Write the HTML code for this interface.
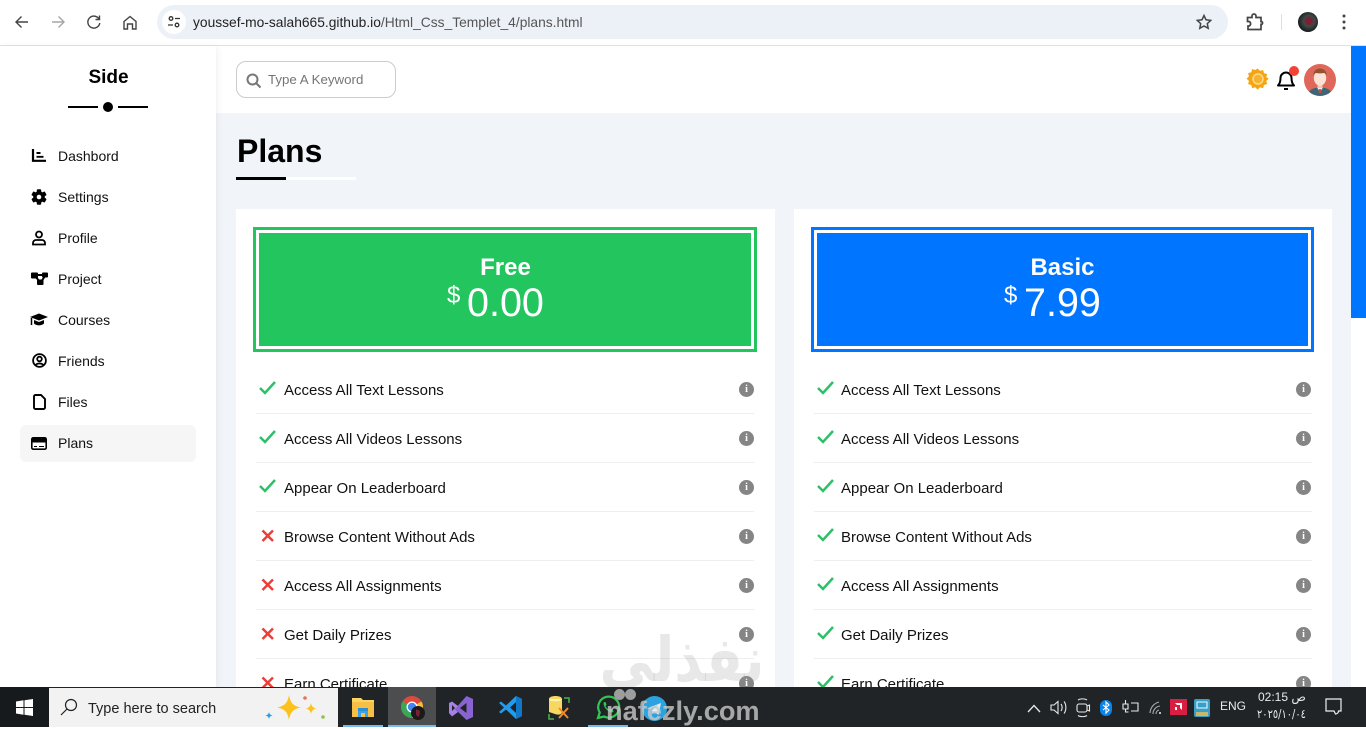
<!DOCTYPE html>
<html lang="en"><head><meta charset="utf-8"><title>Plans</title>
<style>
*{box-sizing:border-box;margin:0;padding:0}
html,body{width:1366px;height:727px;overflow:hidden;background:#fff;font-family:"Liberation Sans",sans-serif;color:#000}
.a{position:absolute}
svg{position:absolute;display:block;overflow:visible}
.nav{position:absolute;left:58px;font-size:14px;line-height:16px;color:#111;white-space:nowrap}
.row{position:absolute;font-size:15px;line-height:18px;white-space:nowrap;color:#111}
.sep{position:absolute;height:1px;background:#eee}
.card{position:absolute;top:209px;height:478px;background:#fff}
.head{position:absolute;top:227px;height:125px;width:504px;color:#fff;text-align:center}
.info{position:absolute;width:15px;height:15px;border-radius:50%;background:#858585;color:#fff;font:bold 10px/15px "Liberation Serif",serif;text-align:center}
</style></head><body>

<!-- browser chrome -->
<div class="a" style="left:0;top:0;width:1366px;height:46px;background:#fff;border-bottom:1px solid #dfe3e8"></div>
<svg style="left:0;top:0" width="160" height="46" fill="none" stroke="#444" stroke-width="1.400">
<path d="M28 22H16M21.500 16.500L16 22l5.500 5.500"/>
<path d="M52 22H64M58.500 16.500L64 22l-5.500 5.500" stroke="#a5a5a5"/>
<path d="M99 19a6 6 0 1 0 .8 4M99.500 15.500V19.500H95.500"/>
<path d="M124 21.500L130 16.500l6 5v7.500h-3.500v-5h-5v5H124z"/>
</svg>
<div class="a" style="left:157px;top:5px;width:1071px;height:34px;border-radius:17px;background:#ecf1f8"></div>
<div class="a" style="left:162px;top:10px;width:24px;height:24px;border-radius:50%;background:#fff"></div>
<svg style="left:162px;top:10px" width="24" height="24" fill="none" stroke="#333" stroke-width="1.300"><circle cx="9" cy="8.500" r="1.800"/><path d="M13 8.500h5M6 15h5"/><circle cx="15" cy="15" r="1.800"/></svg>
<div class="a" style="left:193px;top:14px;font-size:13.800px;line-height:17px;color:#222;white-space:nowrap">youssef-mo-salah665.github.io<span style="color:#555">/Html_Css_Templet_4/plans.html</span></div>
<svg style="left:1196px;top:14px" width="16" height="16" viewBox="0 0 16 16" fill="none" stroke="#444" stroke-width="1.500"><path d="M8 1.500l2 4.300 4.700.6-3.400 3.200.9 4.700L8 12l-4.200 2.300.9-4.700L1.300 6.400 6 5.800z"/></svg>
<svg style="left:1246px;top:13px" width="18" height="18" viewBox="0 0 18 18" fill="none" stroke="#444" stroke-width="1.700"><path d="M1.500 4.500H6V3a2 2 0 0 1 4 0v1.500h5v4.200h1a2 2 0 0 1 0 2.600h-1v5.200H2v-3.500h1.200a2.500 2.500 0 0 0 0-4.500H1.500z"/></svg>
<div class="a" style="left:1281px;top:14px;width:1px;height:16px;background:#d5e0ee"></div>
<div class="a" style="left:1298px;top:12px;width:20px;height:20px;border-radius:50%;background:radial-gradient(circle at 55% 45%,#7a2030 0 18%,#3d4a48 35%,#151515 75%)"></div>
<svg style="left:1342px;top:14px" width="4" height="16" fill="#444"><circle cx="2" cy="2" r="1.500"/><circle cx="2" cy="8" r="1.500"/><circle cx="2" cy="14" r="1.500"/></svg>

<!-- page bg -->
<div class="a" style="left:216px;top:46px;width:1135px;height:641px;background:#f1f5f9"></div>
<div class="a" style="left:1351px;top:46px;width:15px;height:272px;background:#0075ff"></div>

<!-- top header -->
<div class="a" style="left:216px;top:46px;width:1135px;height:67px;background:#fff"></div>

<!-- sidebar -->
<div class="a" style="left:0;top:46px;width:216px;height:641px;background:#fff;box-shadow:2px 0 6px rgba(0,0,0,.05)"></div>
<div class="a" style="left:0;top:66px;width:217px;text-align:center;font-size:19px;font-weight:bold;line-height:23px">Side</div>
<div class="a" style="left:68px;top:106px;width:30px;height:2px;background:#000"></div>
<div class="a" style="left:118px;top:106px;width:30px;height:2px;background:#000"></div>
<div class="a" style="left:103px;top:102px;width:10px;height:10px;border-radius:50%;background:#000"></div>
<div class="a" style="left:20px;top:425px;width:176px;height:37px;border-radius:6px;background:#f6f6f6"></div>

<svg style="left:31px;top:148px" width="16" height="16" fill="none" stroke="#000" stroke-width="2.200"><path d="M2 1v11.800h13"/><path d="M5.500 5h4M5.500 8.800h7" stroke-width="1.900"/></svg>
<svg style="left:31px;top:189px" width="16" height="16" viewBox="0 0 16 16"><g fill="#000"><rect x="5.800" y="0.300" width="4.400" height="15.400" rx="1"/><rect x="5.800" y="0.300" width="4.400" height="15.400" rx="1" transform="rotate(60 8 8)"/><rect x="5.800" y="0.300" width="4.400" height="15.400" rx="1" transform="rotate(120 8 8)"/><circle cx="8" cy="8" r="5.800"/></g><circle cx="8" cy="8" r="2.300" fill="#fff"/></svg>
<svg style="left:32px;top:230px" width="14" height="16" fill="none" stroke="#000" stroke-width="1.800"><circle cx="7" cy="4.500" r="3"/><path d="M1 14.500v-1.500a3 3 0 0 1 3-3h6a3 3 0 0 1 3 3v1.500z"/></svg>
<svg style="left:31px;top:272px" width="17" height="14"><g fill="#000"><rect x="0" y="0.500" width="7" height="6" rx="1"/><rect x="11" y="0.500" width="6" height="5" rx="1"/><rect x="6" y="7.500" width="6.500" height="5.500" rx="1"/></g><path d="M5 3H12M4 4l5 6M14 4l-4 6" stroke="#000" stroke-width="2"/></svg>
<svg style="left:30px;top:313px" width="18" height="14" viewBox="0 0 18 14"><path d="M9 0.500L18 4 9 7.500 0 4z" fill="#000"/><path d="M4 7v3.500c2.500 2.500 7.500 2.500 10 0V7L9 9z" fill="#000"/><path d="M1.500 5v7" stroke="#000" stroke-width="1.500"/></svg>
<svg style="left:32px;top:353px" width="15" height="15" fill="none" stroke="#000" stroke-width="1.800"><circle cx="7.500" cy="7.500" r="6.400"/><circle cx="7.500" cy="6" r="2.300"/><path d="M3.500 12.500c1-2.700 7-2.700 8 0"/></svg>
<svg style="left:33px;top:394px" width="13" height="16" fill="none" stroke="#000" stroke-width="1.900"><path d="M1 2.500a1.500 1.500 0 0 1 1.500-1.500H8l4 4v8.500a1.500 1.500 0 0 1-1.500 1.500h-8A1.500 1.500 0 0 1 1 13.500z"/></svg>
<svg style="left:31px;top:437px" width="16" height="13"><rect x="0.800" y="0.800" width="14.400" height="11.400" rx="1.500" fill="#fff" stroke="#000" stroke-width="1.600"/><rect x="1" y="1.500" width="14" height="4" fill="#000"/><path d="M3 9.500h3M8 9.500h5" stroke="#000"/></svg>

<div class="nav" style="top:148px">Dashbord</div>
<div class="nav" style="top:189px">Settings</div>
<div class="nav" style="top:230px">Profile</div>
<div class="nav" style="top:271px">Project</div>
<div class="nav" style="top:312px">Courses</div>
<div class="nav" style="top:353px">Friends</div>
<div class="nav" style="top:394px">Files</div>
<div class="nav" style="top:435px">Plans</div>

<!-- header controls -->
<div class="a" style="left:236px;top:61px;width:160px;height:37px;border:1px solid #ccc;border-radius:10px;background:#fff"></div>
<svg style="left:246px;top:73px" width="16" height="16" fill="none" stroke="#777" stroke-width="2"><circle cx="6.500" cy="6.500" r="5"/><path d="M10.500 10.500L14.500 14.500"/></svg>
<div class="a" style="left:268px;top:72px;font-size:13.300px;line-height:16px;color:#757575;white-space:nowrap">Type A Keyword</div>

<svg style="left:1247px;top:68px" width="22" height="22" viewBox="0 0 22 22"><path d="M11 0l2.600 2.600 3.400-1 .9 3.500 3.500.9-1 3.400L23 11l-2.600 2.600 1 3.400-3.500.9-.9 3.500-3.400-1L11 23l-2.600-2.600-3.400 1-.9-3.500-3.500-.9 1-3.400L-1 11l2.600-2.600-1-3.400 3.500-.9.9-3.500 3.400 1z" fill="#f5a511" transform="translate(.5 .5) scale(.92)"/><circle cx="11" cy="11" r="5" fill="#f7b232" stroke="#fdd98c" stroke-width="1.500"/></svg>
<svg style="left:1277px;top:70px" width="18" height="22" viewBox="0 0 18 22" fill="none" stroke="#000" stroke-width="2"><path d="M1 15.500c2-2 2.500-4 2.500-7.500a5.500 5.500 0 0 1 11 0c0 3.500.5 5.500 2.500 7.500z" stroke-linejoin="round"/><path d="M7 19h4"/></svg>
<div class="a" style="left:1289px;top:66px;width:10px;height:10px;border-radius:50%;background:#f44336"></div>
<svg style="left:1304px;top:64px" width="32" height="32" viewBox="0 0 32 32"><defs><clipPath id="c"><circle cx="16" cy="16" r="16"/></clipPath></defs><g clip-path="url(#c)"><rect width="32" height="32" fill="#e0685a"/><path d="M4 32c0-6 5-8.500 12-8.500S28 26 28 32z" fill="#3e6478"/><path d="M13 23.500h6L16 28z" fill="#f3e9e2"/><path d="M15.200 25h1.600l.6 4h-2.800z" fill="#c74c40"/><rect x="13.500" y="19" width="5" height="5" fill="#edc8b4"/><ellipse cx="16" cy="14" rx="6.200" ry="7.600" fill="#fbe2d5"/><path d="M9.500 12c-.5-5 3-7.500 6.500-7.500s7 2.500 6.500 7.500c-.5-1.500-1.200-2.600-2.500-3-2 .5-6 .5-8 0-1.300.4-2 1.500-2.500 3z" fill="#8f5530"/></g></svg>

<!-- title -->
<div class="a" style="left:237px;top:133px;font-size:32px;font-weight:bold;line-height:37px">Plans</div>
<div class="a" style="left:236px;top:177px;width:120px;height:3px;background:#fff"></div>
<div class="a" style="left:236px;top:177px;width:50px;height:3px;background:#000"></div>

<!-- cards -->
<div class="card" style="left:236px;width:539px"></div>
<div class="card" style="left:794px;width:538px"></div>

<div class="head" style="left:253px;background:#22c55e;border:3px solid #22c55e;box-shadow:inset 0 0 0 3px #fff">
<div class="a" style="left:1px;right:0;top:24px;font-size:24px;font-weight:bold;line-height:28px">Free</div>
<div class="a" style="left:191px;top:52px;font-size:24px;line-height:28px">$</div>
<div class="a" style="left:211px;top:50px;font-size:39.500px;line-height:46px">0.00</div>
</div>
<div class="head" style="left:811px;width:503px;background:#0075ff;border:3px solid #0075ff;box-shadow:inset 0 0 0 3px #fff">
<div class="a" style="left:0;right:0;top:24px;font-size:24px;font-weight:bold;line-height:28px">Basic</div>
<div class="a" style="left:190px;top:52px;font-size:24px;line-height:28px">$</div>
<div class="a" style="left:210px;top:50px;font-size:39.500px;line-height:46px">7.99</div>
</div>

<svg style="left:0;top:0;pointer-events:none" width="1366" height="727" fill="none" stroke-width="2.500">
<g stroke="#2cc068">
<path d="M260 388l5 5 10-11M260 437l5 5 10-11M260 486l5 5 10-11"/>
<path d="M818 388l5 5 10-11M818 437l5 5 10-11M818 486l5 5 10-11M818 535l5 5 10-11M818 584l5 5 10-11M818 633l5 5 10-11M818 682l5 5 10-11"/>
</g>
<g stroke="#ea3f38">
<path d="M262.500 530.500l10.500 10.500M273 530.500l-10.500 10.500M262.500 579.500l10.500 10.500M273 579.500l-10.500 10.500M262.500 628.500l10.500 10.500M273 628.500l-10.500 10.500M262.500 677.500l10.500 10.500M273 677.500l-10.500 10.500"/>
</g>
</svg>

<div class="row" style="left:284px;top:382px">Access All Text Lessons</div>
<div class="row" style="left:284px;top:431px">Access All Videos Lessons</div>
<div class="row" style="left:284px;top:480px">Appear On Leaderboard</div>
<div class="row" style="left:284px;top:529px">Browse Content Without Ads</div>
<div class="row" style="left:284px;top:578px">Access All Assignments</div>
<div class="row" style="left:284px;top:627px">Get Daily Prizes</div>
<div class="row" style="left:284px;top:676px">Earn Certificate</div>

<div class="row" style="left:841px;top:382px">Access All Text Lessons</div>
<div class="row" style="left:841px;top:431px">Access All Videos Lessons</div>
<div class="row" style="left:841px;top:480px">Appear On Leaderboard</div>
<div class="row" style="left:841px;top:529px">Browse Content Without Ads</div>
<div class="row" style="left:841px;top:578px">Access All Assignments</div>
<div class="row" style="left:841px;top:627px">Get Daily Prizes</div>
<div class="row" style="left:841px;top:676px">Earn Certificate</div>

<div class="sep" style="left:256px;width:498px;top:413px"></div>
<div class="sep" style="left:256px;width:498px;top:462px"></div>
<div class="sep" style="left:256px;width:498px;top:511px"></div>
<div class="sep" style="left:256px;width:498px;top:560px"></div>
<div class="sep" style="left:256px;width:498px;top:609px"></div>
<div class="sep" style="left:256px;width:498px;top:658px"></div>
<div class="sep" style="left:814px;width:498px;top:413px"></div>
<div class="sep" style="left:814px;width:498px;top:462px"></div>
<div class="sep" style="left:814px;width:498px;top:511px"></div>
<div class="sep" style="left:814px;width:498px;top:560px"></div>
<div class="sep" style="left:814px;width:498px;top:609px"></div>
<div class="sep" style="left:814px;width:498px;top:658px"></div>

<div class="info" style="left:739px;top:382px">i</div>
<div class="info" style="left:739px;top:431px">i</div>
<div class="info" style="left:739px;top:480px">i</div>
<div class="info" style="left:739px;top:529px">i</div>
<div class="info" style="left:739px;top:578px">i</div>
<div class="info" style="left:739px;top:627px">i</div>
<div class="info" style="left:739px;top:676px">i</div>
<div class="info" style="left:1296px;top:382px">i</div>
<div class="info" style="left:1296px;top:431px">i</div>
<div class="info" style="left:1296px;top:480px">i</div>
<div class="info" style="left:1296px;top:529px">i</div>
<div class="info" style="left:1296px;top:578px">i</div>
<div class="info" style="left:1296px;top:627px">i</div>
<div class="info" style="left:1296px;top:676px">i</div>

<!-- watermark arabic -->
<div class="a" style="left:560px;top:600px;width:240px;height:87px;overflow:hidden"><div class="a" style="left:0;top:25px;width:244px;text-align:center;font:bold 62px/70px 'DejaVu Sans',sans-serif;color:rgba(150,150,150,.22);direction:rtl;white-space:nowrap;transform:scaleX(.87)">نفذلي</div></div>

<!-- taskbar -->
<div class="a" style="left:0;top:687px;width:1366px;height:40px;background:#202427"></div>
<div class="a" style="left:0;top:687px;width:49px;height:40px;background:#171a1d"></div>
<svg style="left:16px;top:699px" width="17" height="17" fill="#fff"><path d="M0 2.500L7.500 1.300V8H0zM8.500 1.200L17 0v8H8.500zM0 9h7.500v6.700L0 14.500zM8.500 9H17v8l-8.500-1.200z"/></svg>
<div class="a" style="left:49px;top:688px;width:289px;height:39px;background:#f2f2f2"></div>
<svg style="left:60px;top:698px" width="18" height="18" fill="none" stroke="#222" stroke-width="1.200"><circle cx="11" cy="7" r="5.500"/><path d="M7 11L1 17"/></svg>
<div class="a" style="left:88px;top:700px;font-size:14.500px;line-height:18px;color:#222;white-space:nowrap">Type here to search</div>
<svg style="left:262px;top:692px" width="66" height="32"><path d="M27 3c1.500 8 4 11 12 12.500-8 1.500-10.500 4.500-12 12.500-1.500-8-4-11-12-12.500 8-1.500 10.500-4.500 12-12.500z" fill="#fcc21b"/><path d="M49 11c.7 3.500 2 4.500 5 5.500-3 1-4.300 2-5 5.500-.7-3.500-2-4.500-5-5.500 3-1 4.300-2 5-5.500z" fill="#fcc21b"/><path d="M7 20c.5 2.200 1.500 3 3.500 3.500-2 .5-3 1.300-3.500 3.500-.5-2.200-1.500-3-3.500-3.500 2-.5 3-1.300 3.500-3.500z" fill="#2a9de8"/><circle cx="43" cy="6" r="1.800" fill="#e8735a"/><circle cx="61" cy="25" r="1.800" fill="#8bc34a"/></svg>

<div class="a" style="left:388px;top:687px;width:48px;height:40px;background:#4b4d4f"></div>
<div class="a" style="left:343px;top:725px;width:40px;height:2px;background:#76b9ed"></div>
<div class="a" style="left:388px;top:725px;width:48px;height:2px;background:#76b9ed"></div>
<div class="a" style="left:588px;top:725px;width:40px;height:2px;background:#76b9ed"></div>

<!-- explorer -->
<svg style="left:351px;top:696px" width="24" height="22"><path d="M1 2h9l2 2h11v17H1z" fill="#fcd462"/><rect x="1" y="6" width="22" height="15" fill="#f6bf45"/><path d="M7 21v-7h10v7h-3v-4h-4v4z" fill="#38a3e8"/><rect x="7" y="12" width="10" height="3" fill="#2d8fd6"/></svg>
<!-- chrome -->
<svg style="left:400px;top:695px" width="26" height="26" viewBox="0 0 26 26"><circle cx="12" cy="12" r="11" fill="#de4b3c"/><path d="M12 12L2.500 6.500A11 11 0 0 0 12 23z" fill="#3aa757"/><path d="M12 12V23a11 11 0 0 0 9.500-16.500z" fill="#fbc02d"/><circle cx="12" cy="12" r="5.500" fill="#fff"/><circle cx="12" cy="12" r="4.200" fill="#4285f4"/><circle cx="18" cy="18" r="7" fill="#1a1a1a"/><path d="M16 14l4 2-1 6-3-2z" fill="#7a2030"/></svg>
<!-- VS -->
<svg style="left:448px;top:695px" width="26" height="26" viewBox="0 0 26 26"><path d="M18.500 1L25 4v18l-6.500 3L7 14z" fill="#8a63d2"/><path d="M18.500 8L12 13l6.500 5z" fill="#202427"/><path d="M1 8l3-1.500 6 4.500-3 3 3 3-6 4.500L1 18zM4 10v6l3-3z" fill="#a781e8"/></svg>
<!-- VS Code -->
<svg style="left:498px;top:695px" width="25" height="25" viewBox="0 0 25 25"><path d="M18 1l6 3v17l-6 3L8 14.500 3 18.500 1 17l5-4.500L1 8l2-1.500L8 10.500z" fill="#1f9cf0"/><path d="M18 7l-6 5.500 6 5.500z" fill="#202427"/><path d="M18 1l6 3v17l-6 3z" fill="#1177c9"/></svg>
<!-- tool -->
<svg style="left:548px;top:695px" width="25" height="26" viewBox="0 0 25 26"><path d="M1 4c0-4 13-4 13 0v13c0 3-5 3-7 2l-6-2z" fill="#f6d860"/><path d="M1 4c0 3 13 3 13 0" fill="#fff3b0"/><path d="M16 3h5v5M1 19v5h5M17 3" fill="none" stroke="#4caf50" stroke-width="1.500"/><path d="M11 13l9 10M20 13l-9 10" stroke="#f08a24" stroke-width="2"/></svg>
<!-- whatsapp -->
<svg style="left:596px;top:695px" width="25" height="25" viewBox="0 0 25 25" fill="none"><path d="M2 23l1.700-5.500A10.500 10.500 0 1 1 8 21.500z" stroke="#31c653" stroke-width="2.200"/><path d="M8 7c-1 2 0 5 2.500 7.500S16 18 17.500 17l-.5-2.500-2.500-1-1.500 1c-1.500-.7-2.800-2-3.500-3.500l1-1.500-1-2.500z" fill="#31c653"/></svg>
<!-- telegram -->
<svg style="left:642px;top:696px" width="25" height="25" viewBox="0 0 25 25"><circle cx="12.500" cy="12.500" r="12.500" fill="#2aa3e0"/><path d="M5 12.500l14-5.500-2.500 12-4-3-2 2-.5-4 5.500-5-7 4z" fill="#dfeef7"/></svg>

<!-- tray -->
<svg style="left:1020px;top:687px" width="346" height="40" fill="none" stroke="#e8e8e8" stroke-width="1.100">
<path d="M8 25l6-6.500 6 6.500" stroke-width="1.300"/>
<path d="M31 18h3l4-3.500v12l-4-3.500h-3zM41 17c1.500 2 1.500 5 0 7M44 14.500c2.500 3 2.500 9 0 12"/>
<rect x="57" y="17" width="10" height="8" rx="2"/><path d="M67 19l2.500-1v6l-2.500-1M58 13c2-1.500 7-1.500 9 0M58 28.500c2 1.500 7 1.500 9 0"/>
<rect x="80" y="13" width="12" height="16" rx="6" fill="#0a84e8" stroke="none"/><path d="M83 18l6 5-3 3V15l3 3-6 5" stroke="#fff"/>
<path d="M103 17h5v5h-5zM105.500 13v4M105.500 22v3h3M111 16h7v8h-7M118 19v3"/>
<path d="M130 26a12 12 0 0 1 9-11M133 27a8 8 0 0 1 7-8M136 27a4 4 0 0 1 3-4" stroke="#aaa"/><circle cx="140" cy="26" r="1" fill="#eee" stroke="none"/>
<rect x="150" y="12" width="17" height="16" fill="#d81f42" stroke="none"/><path d="M155 16h7v7l-2-2v-3h-3zM155 23v-3h2v3z" fill="#fff" stroke="none"/>
<rect x="174" y="12" width="16" height="18" rx="2" fill="#3a9ec7" stroke="none"/><path d="M176 25h12v4h-12z" fill="#c9b668" stroke="none"/><path d="M177 15h10v6h-10z" stroke="#dff"/>
</svg>
<div class="a" style="left:1220px;top:699px;font-size:12px;line-height:15px;color:#eaeaea">ENG</div>
<div class="a" style="left:1258px;top:690px;width:60px;font:12px/15px 'Liberation Sans','DejaVu Sans',sans-serif;color:#eaeaea;white-space:nowrap;direction:ltr">02:15 ص</div>
<div class="a" style="left:1257px;top:707px;width:62px;font:12px/15px 'DejaVu Sans',sans-serif;color:#eaeaea;white-space:nowrap;direction:ltr;transform:scaleX(.82);transform-origin:left">٢٠٢٥/١٠/٠٤</div>
<svg style="left:1325px;top:698px" width="18" height="18" fill="none" stroke="#eee" stroke-width="1.200"><path d="M1 1h15v12h-2.500a3 3 0 0 1-3 3L9 13H1z"/></svg>

<!-- watermark latin -->
<div class="a" style="left:614px;top:689px;width:11px;height:11px;border-radius:50%;background:#9d9d9d"></div>
<div class="a" style="left:625px;top:689px;width:11px;height:11px;border-radius:50%;background:#9d9d9d"></div>
<div class="a" style="left:606px;top:693px;font:bold 27.200px/36px 'Liberation Sans',sans-serif;color:rgba(200,200,200,.8);white-space:nowrap">nafezly.com</div>
</body></html>
